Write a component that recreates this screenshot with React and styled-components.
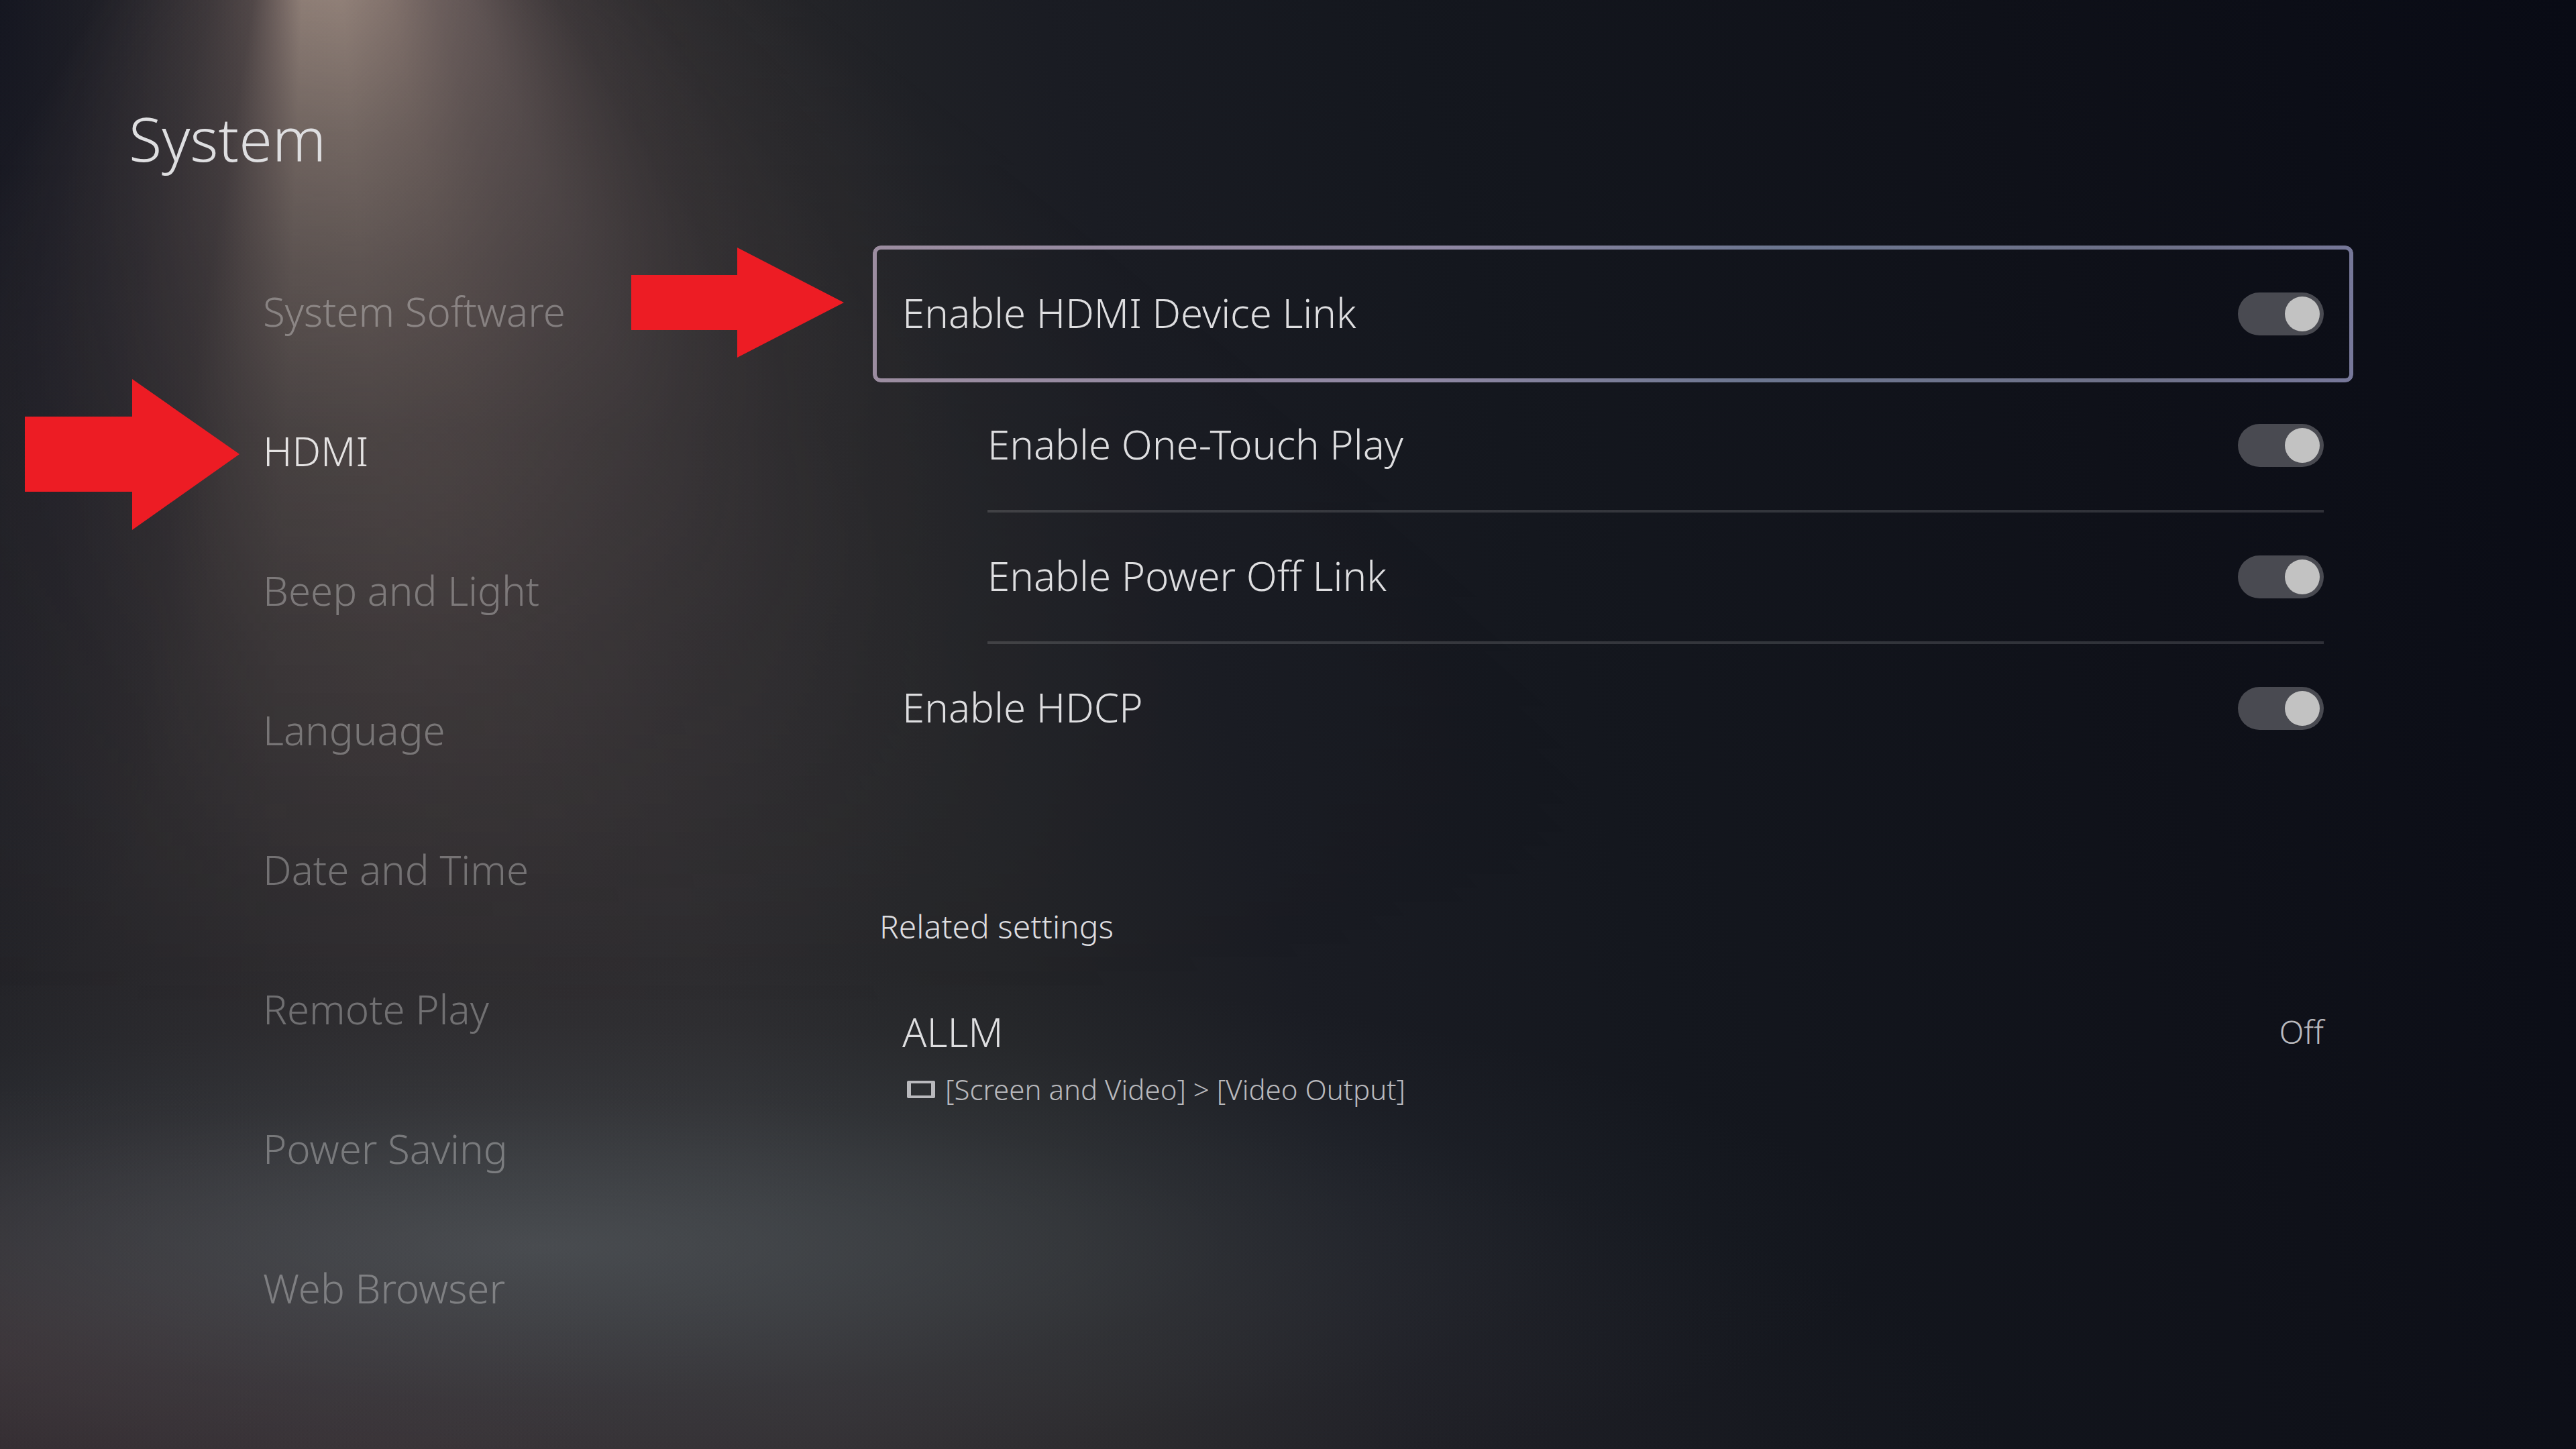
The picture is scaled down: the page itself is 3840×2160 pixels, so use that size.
import React from 'react';
import styled, { createGlobalStyle } from 'styled-components';

const GlobalStyle = createGlobalStyle`
    * {
        box-sizing: border-box;
    }
    body {
        margin: 0;
        background-color: #0b0d17;
        font-family: "Noto Sans", "Open Sans", sans-serif;
        font-weight: 300;
        color: #dedee0;
    }
`

const Page = styled.div`
    position: relative;
    min-height: 100vh;
    padding: 150px 332px 0 192px;
    overflow: hidden;
    background:
        radial-gradient(ellipse 52% 20% at 21% 86%, rgba(98,107,112,.5), rgba(92,103,108,.36) 25%, rgba(86,98,104,.17) 52%, rgba(80,92,98,.05) 78%, rgba(80,92,98,0) 100%),
        radial-gradient(ellipse 24% 18% at 0% 93%, rgba(94,66,68,.26), rgba(86,62,66,.13) 50%, rgba(80,60,62,0) 100%),
        radial-gradient(ellipse 62% 26% at 16% 100%, rgba(72,58,63,.42), rgba(64,54,58,.2) 50%, rgba(56,48,54,0) 100%),
        radial-gradient(ellipse 20% 72% at 17% 34%, rgba(78,65,66,.34), rgba(66,55,58,.18) 50%, rgba(50,44,46,0) 100%),
        radial-gradient(ellipse 10% 70% at 0% 0%, rgba(16,18,30,.8), rgba(16,18,30,.4) 50%, rgba(16,18,30,0) 100%),
        linear-gradient(75deg, #222227 0%, #28282b 16%, #2a2a2d 28%, #242528 38%, #1a1c23 48%, #14171e 60%, #0f1119 80%, #090b15 100%);
`

/* light falling from above the top edge */
const Beam = styled.div`
    position: absolute;
    inset: 0;
    background: conic-gradient(from 0deg at 470px -580px,
        transparent 128deg,
        rgba(172,142,136,.07) 140deg,
        rgba(172,142,136,.18) 148deg,
        rgba(172,144,138,.34) 153deg,
        rgba(176,150,144,.5) 158deg,
        rgba(180,154,146,.6) 163deg,
        rgba(190,164,152,.74) 169deg,
        rgba(196,172,158,.84) 176deg,
        rgba(196,172,158,.82) 182deg,
        rgba(184,158,148,.66) 185deg,
        rgba(170,142,136,.38) 189deg,
        rgba(160,134,130,.24) 195deg,
        rgba(160,134,130,.12) 202deg,
        transparent 210deg);
    mask-image: linear-gradient(180deg, rgba(0,0,0,.78) 0, rgba(0,0,0,.54) 200px, rgba(0,0,0,.36) 400px, rgba(0,0,0,.2) 640px, rgba(0,0,0,.1) 960px, transparent 1500px);
`

const Title = styled.h1`
    position: relative;
    margin: 0 0 98px;
    font-size: 90px;
    font-weight: 300;
    line-height: 112px;
`

const Columns = styled.div`
    position: relative;
    display: grid;
    grid-template-columns: 709px minmax(0, 1fr);
    column-gap: 200px;
    padding-left: 200px;
`

const Nav = styled.nav`
    display: flex;
    flex-direction: column;
    align-items: flex-start;
`

const NavLink = styled.a`
    font-size: 60px;
    line-height: 208px;
    text-decoration: none;
    color: ${props => props.$active ? "#e4e2e2" : "rgba(255,255,255,.32)"};
`

const Panel = styled.main`
    padding-top: 8px;
`

const SettingRow = styled.label`
    position: relative;
    display: flex;
    align-items: center;
    justify-content: space-between;
    height: ${props => props.$focused ? "200px" : props.$nested ? "196px" : "192px"};
    margin-left: ${props => props.$nested ? "171px" : "0"};
    margin-right: ${props => props.$nested ? "44px" : "0"};
    padding: ${props => props.$nested ? "0" : "0 44px"};
    border-bottom: ${props => props.$nested ? "4px solid rgba(255,255,255,.14)" : "none"};
`

const FocusRing = styled.span`
    position: absolute;
    inset: -2px 0;
    border: 6px solid transparent;
    border-radius: 12px;
    background: linear-gradient(100deg, #9c8da0 0%, #8f87a3 38%, #6c7690 60%, #6e7188 85%, #77789a 100%) border-box;
    mask: linear-gradient(#000 0 0) padding-box, linear-gradient(#000 0 0) border-box;
    mask-composite: exclude;
`

const SettingText = styled.span`
    padding-bottom: 4px;
    font-size: 60px;
    line-height: 80px;
`

const Switch = styled.input`
    appearance: none;
    flex: none;
    width: 128px;
    height: 64px;
    margin: 0;
    padding: 6px;
    border-radius: 32px;
    background-color: #494a51;

    &::before {
        content: "";
        display: block;
        width: 52px;
        height: 52px;
        border-radius: 50%;
        background-color: #c2c2c2;
    }
    &:checked::before {
        margin-left: auto;
    }
`

const RelatedTitle = styled.h2`
    margin: 197px 0 85px;
    padding-left: 10px;
    font-size: 48px;
    font-weight: 300;
    line-height: 64px;
`

const RelatedLink = styled.a`
    display: block;
    padding: 0 44px;
    color: inherit;
    text-decoration: none;
`

const RelatedHead = styled.div`
    display: flex;
    align-items: center;
    justify-content: space-between;
    margin-bottom: 18px;
    font-size: 60px;
    line-height: 80px;
`

const RelatedValue = styled.span`
    font-size: 48px;
    color: #b9b9bd;
`

const RelatedPath = styled.div`
    display: flex;
    align-items: center;
    gap: 15px;
    padding-left: 7px;
    font-size: 42px;
    line-height: 56px;
    color: #b9b9bd;
`

const Arrow = styled.svg`
    position: absolute;
    left: ${props => props.$left}px;
    top: ${props => props.$top}px;
    fill: #ed1c24;
`

const navItems = [
    "System Software",
    "HDMI",
    "Beep and Light",
    "Language",
    "Date and Time",
    "Remote Play",
    "Power Saving",
    "Web Browser",
];

const settings = [
    { id: "device-link", text: "Enable HDMI Device Link", focused: true },
    { id: "one-touch", text: "Enable One-Touch Play", nested: true },
    { id: "power-off", text: "Enable Power Off Link", nested: true },
    { id: "hdcp", text: "Enable HDCP" },
];

const Setting = (props) => {
    let ring = null;
    if (props.focused) {
        ring = <FocusRing />
    }
    return (
        <SettingRow htmlFor={props.id} $focused={props.focused} $nested={props.nested}>
            {ring}
            <SettingText>{props.text}</SettingText>
            <Switch type="checkbox" role="switch" id={props.id} defaultChecked />
        </SettingRow>
    )
}

const ScreenIcon = () => (
    <svg width="42" height="26" viewBox="0 0 42 26" aria-hidden="true">
        <path fill="currentColor" fillRule="evenodd" d="M2 0H40A2 2 0 0 1 42 2V24A2 2 0 0 1 40 26H2A2 2 0 0 1 0 24V2A2 2 0 0 1 2 0ZM6 4V22H36V4Z" />
    </svg>
)

const App = () => {
    return (
        <Page>
            <GlobalStyle />
            <Beam />
            <Title>System</Title>
            <Columns>
                <Nav>
                    {navItems.map(item => (
                        <NavLink key={item} href="#" $active={item === "HDMI"}>{item}</NavLink>
                    ))}
                </Nav>
                <Panel>
                    {settings.map(item => <Setting key={item.id} {...item} />)}
                    <RelatedTitle>Related settings</RelatedTitle>
                    <RelatedLink href="#">
                        <RelatedHead>
                            <span>ALLM</span>
                            <RelatedValue>Off</RelatedValue>
                        </RelatedHead>
                        <RelatedPath>
                            <ScreenIcon />
                            <span>[Screen and Video] &gt; [Video Output]</span>
                        </RelatedPath>
                    </RelatedLink>
                </Panel>
            </Columns>
            <Arrow $left={37} $top={565} width="320" height="225" viewBox="0 0 320 225" aria-hidden="true">
                <path d="M0 56H160V0L320 112L160 225V168H0Z" />
            </Arrow>
            <Arrow $left={941} $top={369} width="317" height="164" viewBox="0 0 317 164" aria-hidden="true">
                <path d="M0 41H158V0L317 82L158 164V123H0Z" />
            </Arrow>
        </Page>
    )
}

export default App;
